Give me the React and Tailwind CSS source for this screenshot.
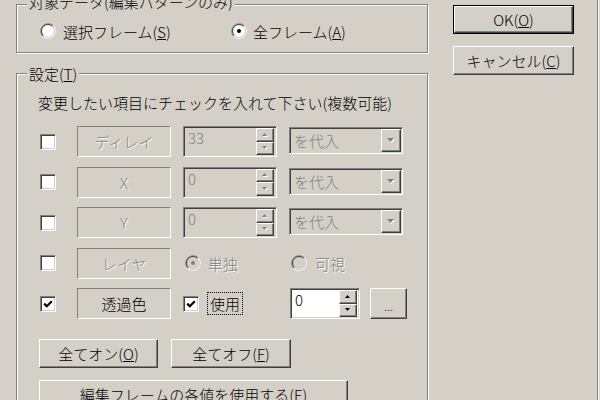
import React from 'react';

function Raised({ className = '', children }) {
  return (
    <div className={`flex items-center justify-center border border-t-white border-l-white border-r-[#404040] border-b-[#404040] shadow-[inset_-1px_-1px_0_#808080] ${className}`}>
      {children}
    </div>
  );
}

function Check({ checked, className = '' }) {
  return (
    <div className={`w-[16px] h-[16px] shrink-0 bg-white border border-t-[#808080] border-l-[#808080] border-r-white border-b-white shadow-[inset_1px_1px_0_#404040,inset_-1px_-1px_0_#d4d0c8] flex items-center justify-center ${className}`}>
      {checked && (
        <svg width="10" height="10" viewBox="0 0 10 10">
          <path d="M1.2 4.6 L3.8 7.2 L8.8 2.2" stroke="black" strokeWidth="2.2" fill="none" />
        </svg>
      )}
    </div>
  );
}

function Radio({ checked, disabled }) {
  const fill = disabled ? '#d4d0c8' : 'white';
  return (
    <svg width="16" height="16" viewBox="0 0 16 16" className="shrink-0">
      <circle cx="8" cy="8" r="6.2" fill={fill} />
      <path d="M2.7 13.3 A7.5 7.5 0 0 1 13.3 2.7" stroke="#808080" fill="none" />
      <path d="M13.3 2.7 A7.5 7.5 0 0 1 2.7 13.3" stroke="white" fill="none" />
      <path d="M3.4 12.6 A6.5 6.5 0 0 1 12.6 3.4" stroke="#404040" fill="none" />
      <path d="M12.6 3.4 A6.5 6.5 0 0 1 3.4 12.6" stroke="#d4d0c8" fill="none" />
      {checked && <circle cx="8" cy="8" r="2" fill={disabled ? '#808080' : 'black'} />}
    </svg>
  );
}

function Arrow({ up, disabled, w = 7, h = 4 }) {
  const c = disabled ? '#808080' : 'black';
  const d = up ? `M0 ${h} L${w} ${h} L${w / 2} 0 Z` : `M0 0 L${w} 0 L${w / 2} ${h} Z`;
  return (
    <svg width={w + 1} height={h + 1} viewBox={`0 0 ${w + 1} ${h + 1}`}>
      {disabled && <path d={d} fill="white" transform="translate(1 1)" />}
      <path d={d} fill={c} />
    </svg>
  );
}

function Spin({ value, disabled, className = '' }) {
  return (
    <div className={`flex p-[1px] border border-t-[#808080] border-l-[#808080] border-r-white border-b-white shadow-[inset_1px_1px_0_#404040,inset_-1px_-1px_0_#d4d0c8] ${disabled ? 'bg-[#d4d0c8]' : 'bg-white'} ${className}`}>
      <div className={`flex-1 pl-[3px] pt-[1px] leading-[17px] ${disabled ? 'text-[#808080]' : 'text-black'}`}>{value}</div>
      <div className="flex flex-col w-[19px] pr-[1px]">
        <Raised className="flex-1 bg-[#d4d0c8]"><Arrow up disabled={disabled} w={5} h={3} /></Raised>
        <Raised className="flex-1 bg-[#d4d0c8]"><Arrow disabled={disabled} w={5} h={3} /></Raised>
      </div>
    </div>
  );
}

function Combo() {
  return (
    <div className="self-start mt-[1px] ml-[12px] w-[114px] h-[27px] flex p-[1px] border border-t-[#808080] border-l-[#808080] border-r-white border-b-white shadow-[inset_1px_1px_0_#404040,inset_-1px_-1px_0_#d4d0c8] bg-[#d4d0c8]">
      <div className="flex-1 pl-[3px] flex items-center text-[#808080] leading-[17px]">を代入</div>
      <Raised className="w-[20px] h-full"><Arrow disabled w={7} h={4} /></Raised>
    </div>
  );
}

function LabelBox({ children, disabled }) {
  return (
    <div className={`ml-[21px] w-[94px] h-[31px] shrink-0 flex items-center justify-center border border-t-[#808080] border-l-[#808080] border-r-white border-b-white leading-[17px] ${disabled ? 'text-[#808080] [text-shadow:1px_1px_0_#fff]' : 'text-black'}`}>
      {children}
    </div>
  );
}

export default function App() {
  return (
    <div className="w-[600px] h-[400px] bg-[#d4d0c8] overflow-hidden flex text-[15px] font-light text-black font-['Noto_Sans_CJK_JP','Noto_Sans',sans-serif]">
      <div className="w-[428px] shrink-0 pl-[16px] pt-[4px] flex flex-col">
        <div className="relative h-[49px] shrink-0 border border-[#808080] shadow-[1px_1px_0_#fff,inset_1px_1px_0_#fff] pl-[23px] pt-[18px]">
          <div className="absolute left-[10px] top-[-12px] px-[2px] bg-[#d4d0c8] leading-[17px]">対象データ(編集パターンのみ)</div>
          <div className="flex items-center h-[16px]">
            <div className="w-[191px] flex items-center">
              <Radio />
              <span className="ml-[7px] leading-[17px]">選択フレーム(<span className="underline">S</span>)</span>
            </div>
            <div className="flex items-center">
              <Radio checked />
              <span className="ml-[6px] leading-[17px]">全フレーム(<span className="underline">A</span>)</span>
            </div>
          </div>
        </div>

        <div className="relative mt-[20px] h-[400px] shrink-0 border border-[#808080] shadow-[1px_1px_0_#fff,inset_1px_1px_0_#fff] pl-[21px] pt-[20px] flex flex-col items-start">
          <div className="absolute left-[10px] top-[-9px] px-[2px] bg-[#d4d0c8] leading-[17px]">設定(<span className="underline">T</span>)</div>
          <div className="leading-[17px]">変更したい項目にチェックを入れて下さい(複数可能)</div>

          <div className="mt-[15px] ml-[2px] flex flex-col gap-[9.5px]">
            <div className="flex items-center h-[31px]">
              <Check />
              <LabelBox disabled>ディレイ</LabelBox>
              <Spin value="33" disabled className="ml-[12px] w-[94px] h-[31px]" />
              <Combo />
            </div>
            <div className="flex items-center h-[31px]">
              <Check />
              <LabelBox disabled>X</LabelBox>
              <Spin value="0" disabled className="ml-[12px] w-[94px] h-[31px]" />
              <Combo />
            </div>
            <div className="flex items-center h-[31px]">
              <Check />
              <LabelBox disabled>Y</LabelBox>
              <Spin value="0" disabled className="ml-[12px] w-[94px] h-[31px]" />
              <Combo />
            </div>
            <div className="flex items-center h-[31px]">
              <Check />
              <LabelBox disabled>レイヤ</LabelBox>
              <div className="ml-[14px] w-[106px] flex items-center">
                <Radio checked disabled />
                <span className="ml-[7px] leading-[17px] text-[#808080] [text-shadow:1px_1px_0_#fff]">単独</span>
              </div>
              <div className="flex items-center">
                <Radio disabled />
                <span className="ml-[8px] leading-[17px] text-[#808080] [text-shadow:1px_1px_0_#fff]">可視</span>
              </div>
            </div>
            <div className="flex items-center h-[31px]">
              <Check checked />
              <LabelBox>透過色</LabelBox>
              <Check checked className="ml-[12px]" />
              <div className="ml-[8px] h-[23px] px-[2px] flex items-center border border-dotted border-black leading-[17px]">使用</div>
              <Spin value="0" className="ml-[47px] w-[70px] h-[31px]" />
              <Raised className="ml-[10px] w-[37px] h-[31px] bg-[#d4d0c8]">
                <span className="text-[12px] leading-none pt-[4px]">...</span>
              </Raised>
            </div>
          </div>

          <div className="mt-[20px] ml-[1px] flex gap-[13px]">
            <Raised className="w-[119px] h-[29px] leading-[17px]">全てオン(<span className="underline">O</span>)</Raised>
            <Raised className="w-[120px] h-[29px] leading-[17px]">全てオフ(<span className="underline">F</span>)</Raised>
          </div>
          <Raised className="mt-[12px] ml-[1px] w-[309px] h-[29px] leading-[17px]">編集フレームの各値を使用する(E)</Raised>
        </div>
      </div>

      <div className="ml-[25px] pt-[5px] flex flex-col gap-[12px] shrink-0">
        <div className="w-[121px] h-[29px] border border-black flex">
          <Raised className="flex-1 leading-[17px]">OK(<span className="underline">O</span>)</Raised>
        </div>
        <Raised className="w-[121px] h-[29px] leading-[17px]">キャンセル(<span className="underline">C</span>)</Raised>
      </div>

      <div className="ml-auto mr-[1px] w-[2px] h-full border-l border-l-[#808080] border-r border-r-white shrink-0"></div>
    </div>
  );
}
